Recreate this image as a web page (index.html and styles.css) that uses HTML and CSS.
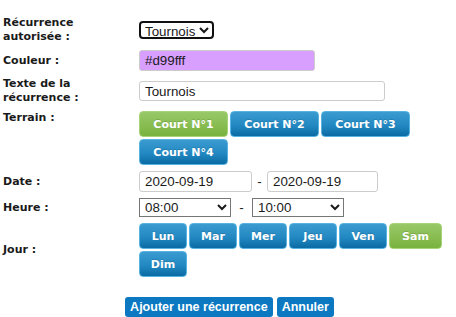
FILE: index.html
```html
<!DOCTYPE html>
<html lang="fr">
<head>
    <meta charset="UTF-8">
    <title>Récurrence</title>
    <link rel="stylesheet" href="styles.css">
</head>
<body>
    <form class="recurrence-form">
        <div class="form-row">
            <label class="form-label">Récurrence<br>autorisée :</label>
            <div class="form-value">
                <select class="select-type">
                    <option>Tournois</option>
                    <option>Cours</option>
                </select>
            </div>
        </div>

        <div class="form-row">
            <label class="form-label">Couleur :</label>
            <div class="form-value">
                <input type="text" class="input-color" value="#d99fff">
            </div>
        </div>

        <div class="form-row">
            <label class="form-label">Texte de la<br>récurrence :</label>
            <div class="form-value">
                <input type="text" class="input-text" value="Tournois">
            </div>
        </div>

        <div class="form-row row-top">
            <label class="form-label">Terrain :</label>
            <div class="form-value btn-list">
                <button type="button" class="toggle court active">Court N°1</button>
                <button type="button" class="toggle court">Court N°2</button>
                <button type="button" class="toggle court">Court N°3</button>
                <button type="button" class="toggle court">Court N°4</button>
            </div>
        </div>

        <div class="form-row">
            <label class="form-label">Date :</label>
            <div class="form-value inline">
                <input type="text" class="input-date" value="2020-09-19">
                <span class="sep">-</span>
                <input type="text" class="input-date date-end" value="2020-09-19">
            </div>
        </div>

        <div class="form-row">
            <label class="form-label">Heure :</label>
            <div class="form-value inline">
                <select class="select-hour"><option>08:00</option></select>
                <span class="sep sep-hour">-</span>
                <select class="select-hour"><option>10:00</option></select>
            </div>
        </div>

        <div class="form-row">
            <label class="form-label">Jour :</label>
            <div class="form-value btn-list">
                <button type="button" class="toggle day">Lun</button>
                <button type="button" class="toggle day">Mar</button>
                <button type="button" class="toggle day">Mer</button>
                <button type="button" class="toggle day">Jeu</button>
                <button type="button" class="toggle day">Ven</button>
                <button type="button" class="toggle day day-wide active">Sam</button>
                <button type="button" class="toggle day">Dim</button>
            </div>
        </div>

        <div class="form-actions">
            <button type="button" class="action">Ajouter une récurrence</button>
            <button type="button" class="action">Annuler</button>
        </div>
    </form>
</body>
</html>
```

FILE: styles.css
```css
body {
    margin: 0;
    background-color: #ffffff;
    font-family: "Liberation Sans", Arial, sans-serif;
    color: #1a1a1a;
}
.recurrence-form {
    display: flex;
    flex-direction: column;
    gap: 6px;
    padding: 16px 0 0 3px;
}
.form-row {
    display: flex;
    align-items: center;
}
.row-top {
    align-items: flex-start;
}
.form-label {
    width: 136px;
    flex-shrink: 0;
    font-family: "DejaVu Sans", Verdana, sans-serif;
    font-weight: bold;
    font-size: 11px;
    line-height: 14px;
}
.form-value {
    flex-grow: 1;
}
.inline {
    display: flex;
    align-items: center;
}
.btn-list {
    display: flex;
    flex-wrap: wrap;
    gap: 2px;
    width: 309px;
}
input[type="text"] {
    box-sizing: border-box;
    font-family: "Liberation Sans", Arial, sans-serif;
    font-size: 13.333px;
    color: #1a1a1a;
    border: 1px solid #cccccc;
    border-radius: 3px;
    padding: 0 5px;
    margin: 0;
    display: block;
}
.input-color {
    width: 176px;
    height: 21px;
    background-color: #d99fff;
}
.input-text {
    width: 246px;
    height: 20px;
}
.input-date {
    width: 113px;
    height: 21px;
}
.date-end {
    width: 111px;
}
select {
    font-family: "Liberation Sans", Arial, sans-serif;
    font-size: 13.333px;
    color: #1a1a1a;
    margin: 0;
    box-sizing: border-box;
    background-color: #ffffff;
}
.select-type {
    width: 75px;
    height: 18px;
    border: 2px solid #101010;
    border-radius: 4px;
    padding: 0;
}
.select-hour {
    width: 92px;
    height: 19px;
    border: 1px solid #767676;
    border-radius: 0;
    padding: 0 1px;
}
.sep {
    width: 15px;
    text-align: center;
    font-size: 13.333px;
}
.sep-hour {
    width: 21px;
}
.toggle {
    box-sizing: border-box;
    height: 26px;
    padding: 0;
    margin: 0;
    font-family: "DejaVu Sans", Verdana, sans-serif;
    font-weight: bold;
    font-size: 11px;
    color: #ffffff;
    border: 1px solid #56b3e2;
    border-radius: 4px;
    background: linear-gradient(#3a9bd0, #2389c2 55%, #0b6ba4);
    text-shadow: 0 -1px 0 rgba(0, 0, 0, 0.15);
    cursor: pointer;
}
.toggle.active {
    border-color: #a6d477;
    background: linear-gradient(#98c868, #88bd52 55%, #79b23f);
}
.court {
    width: 89px;
}
.day {
    width: 48px;
}
.day-wide {
    width: 53px;
}
.form-actions {
    display: flex;
    justify-content: center;
    gap: 4px;
    margin-top: 14px;
}
.action {
    box-sizing: border-box;
    height: 20px;
    padding: 0 5px;
    margin: 0;
    font-family: "Liberation Sans", Arial, sans-serif;
    font-weight: bold;
    font-size: 12.5px;
    color: #ffffff;
    background-color: #0b78c1;
    border: none;
    border-radius: 3px;
    cursor: pointer;
}
```
